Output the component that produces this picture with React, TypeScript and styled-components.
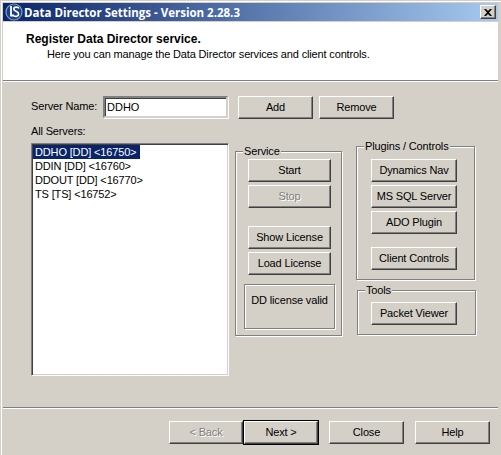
import styled, { createGlobalStyle } from 'styled-components';

const FACE = '#d4d0c8';

const GlobalStyle = createGlobalStyle`
    html, body {
        margin: 0;
        padding: 0;
        background: ${FACE};
    }
    body {
        font-family: "Liberation Sans", Arial, sans-serif;
        font-size: 11px;
        letter-spacing: -0.15px;
        color: #000;
    }
`;

const Window = styled.div`
    width: 501px;
    height: 455px;
    box-sizing: border-box;
    padding: 3px 3px 0;
    display: flex;
    flex-direction: column;
    background: ${FACE};
    box-shadow: inset 1px 1px 0 ${FACE}, inset 2px 2px 0 #fff;
    overflow: hidden;
`;

const TitleBar = styled.div`
    height: 18px;
    flex: none;
    display: flex;
    align-items: center;
    padding: 0 2px 0 2px;
    background: linear-gradient(to right, #0a246a, #a6caf0);
`;

const LogoMark = styled.svg`
    flex: none;
`;

const TitleText = styled.span`
    margin-left: 1px;
    font-family: "Open Sans", sans-serif;
    font-weight: 700;
    font-size: 11.5px;
    letter-spacing: 0;
    color: #fff;
    white-space: nowrap;
    flex: 1;
`;

const CloseBox = styled.div`
    width: 16px;
    height: 14px;
    box-sizing: border-box;
    display: flex;
    align-items: center;
    justify-content: center;
    background: ${FACE};
    border: 1px solid;
    border-color: #fff #404040 #404040 #fff;
    box-shadow: inset -1px -1px 0 #808080;
`;

const Header = styled.div`
    height: 58px;
    flex: none;
    box-sizing: border-box;
    background: #fff;
    margin-top: 1px;
    padding: 10px 0 0 23px;
`;

const HeaderTitle = styled.div`
    font-weight: 700;
    font-size: 12px;
    letter-spacing: 0;
    line-height: 15px;
`;

const HeaderText = styled.div`
    margin-left: 21px;
    line-height: 15px;
`;

const Etched = styled.div`
    height: 1px;
    flex: none;
    background: #808080;
    border-bottom: 1px solid #fff;
`;

const Body = styled.div`
    flex: 1;
    padding: 14px 0 0 28px;
`;

const ServerRow = styled.div`
    display: flex;
    align-items: flex-start;
`;

const NameLabel = styled.label`
    width: 72px;
    flex: none;
    line-height: 21px;
    white-space: nowrap;
`;

const NameInput = styled.input`
    width: 125px;
    height: 22px;
    flex: none;
    box-sizing: border-box;
    margin: 0 10px 0 0;
    padding: 0 0 0 2px;
    border: 2px solid;
    border-color: #808080 #d4d0c8 #d4d0c8 #808080;
    box-shadow: inset 1px 1px 0 #404040, 1px 1px 0 #fff;
    font: inherit;
    letter-spacing: 0;
    background: #fff;
`;

const Button = styled.button<{ $width?: number; $top?: number; $left?: number; $isDefault?: boolean }>`
    display: block;
    width: ${props => props.$width ?? 83}px;
    height: 23px;
    flex: none;
    box-sizing: border-box;
    margin: ${props => props.$top ?? 0}px 0 0 ${props => props.$left ?? 0}px;
    padding: 0 0 1px;
    font: inherit;
    letter-spacing: inherit;
    color: #000;
    background: ${FACE};
    border: 1px solid;
    border-color: #fff #404040 #404040 #fff;
    box-shadow: inset -1px -1px 0 #808080;
    ${props => props.$isDefault && `
        outline: 1px solid #000;
        outline-offset: 0;
    `}
    &:disabled {
        color: #808080;
        text-shadow: 1px 1px 0 #fff;
    }
`;

const Columns = styled.div`
    display: flex;
    align-items: flex-start;
`;

const LeftColumn = styled.div`
    width: 198px;
    flex: none;
    margin-right: 6px;
`;

const ListLabel = styled.div`
    margin-top: 5px;
    line-height: 14px;
    height: 19px;
`;

const ServerList = styled.div`
    height: 233px;
    box-sizing: border-box;
    padding: 1px;
    background: #fff;
    border: 1px solid;
    border-color: #808080 #fff #fff #808080;
    box-shadow: inset 1px 1px 0 #404040, inset -1px -1px 0 #d4d0c8;
`;

const ServerItem = styled.div<{ $selected?: boolean }>`
    width: fit-content;
    height: 14px;
    line-height: 14px;
    padding: 0 4px 0 2px;
    color: ${props => props.$selected ? '#fff' : '#000'};
    background: ${props => props.$selected ? '#0a246a' : 'transparent'};
    white-space: nowrap;
`;

const Group = styled.fieldset<{ $width: number; $height: number; $top?: number; $left?: number; $pad?: number }>`
    width: ${props => props.$width}px;
    height: ${props => props.$height}px;
    flex: none;
    box-sizing: border-box;
    margin: ${props => props.$top ?? 0}px 0 0 ${props => props.$left ?? 0}px;
    padding: ${props => props.$pad ?? 1}px 0 0;
    min-inline-size: 0;
    border: 1px solid #808080;
    box-shadow: 1px 1px 0 #fff, inset 1px 1px 0 #fff;
`;

const Legend = styled.legend`
    margin-left: 7px;
    padding: 0 1px;
    height: 13px;
    line-height: 13px;
    background: ${FACE};
`;

const ButtonStack = styled.div<{ $left: number }>`
    margin-left: ${props => props.$left}px;
`;

const LicenseBox = styled.div`
    width: 91px;
    height: 45px;
    box-sizing: border-box;
    margin: 9px 0 0 8px;
    padding-top: 9px;
    text-align: center;
    border: 1px solid #808080;
    box-shadow: 1px 1px 0 #fff, inset 1px 1px 0 #fff;
`;

const RightColumn = styled.div`
    flex: none;
    margin-left: 14px;
`;

const Footer = styled.div`
    display: flex;
    justify-content: flex-end;
    padding: 12px 8px 0 0;
    height: 46px;
    flex: none;
    box-sizing: border-box;
`;

const Logo = () => (
    <LogoMark width="18" height="18" viewBox="0 0 18 18">
        <circle cx="9" cy="9" r="8" fill="#1a3f82" stroke="#7f9fcc" strokeWidth="1.2" />
        <path d="M6 3 V12.500 H9" fill="none" stroke="#fff" strokeWidth="1.8" />
        <path d="M14 5.500 C13 3.500 8.800 3.600 8.800 6 C8.800 8.600 13.600 8 13.600 11 C13.600 13.600 10.500 13.900 8.800 12.800" fill="none" stroke="#fff" strokeWidth="1.6" />
    </LogoMark>
);

const App = () => {
    return (
        <Window>
            <GlobalStyle />
            <TitleBar>
                <Logo />
                <TitleText>Data Director Settings - Version 2.28.3</TitleText>
                <CloseBox>
                    <svg width="8" height="7" viewBox="0 0 8 7">
                        <path d="M0 0h2l2 2 2-2h2L5 3.500 8 7H6L4 5 2 7H0l3-3.500z" fill="#000" />
                    </svg>
                </CloseBox>
            </TitleBar>
            <Header>
                <HeaderTitle>Register Data Director service.</HeaderTitle>
                <HeaderText>Here you can manage the Data Director services and client controls.</HeaderText>
            </Header>
            <Etched />
            <Body>
                <ServerRow>
                    <NameLabel>Server Name:</NameLabel>
                    <NameInput defaultValue="DDHO" />
                    <Button $width={75}>Add</Button>
                    <Button $width={75} $left={6}>Remove</Button>
                </ServerRow>
                <Columns>
                    <LeftColumn>
                        <ListLabel>All Servers:</ListLabel>
                        <ServerList>
                            <ServerItem $selected>DDHO [DD] &lt;16750&gt;</ServerItem>
                            <ServerItem>DDIN [DD] &lt;16760&gt;</ServerItem>
                            <ServerItem>DDOUT [DD] &lt;16770&gt;</ServerItem>
                            <ServerItem>TS [TS] &lt;16752&gt;</ServerItem>
                        </ServerList>
                    </LeftColumn>
                    <Group $width={107} $height={191} $top={26}>
                        <Legend>Service</Legend>
                        <ButtonStack $left={12}>
                            <Button>Start</Button>
                            <Button $top={3} disabled>Stop</Button>
                            <Button $top={18}>Show License</Button>
                            <Button $top={3}>Load License</Button>
                        </ButtonStack>
                        <LicenseBox>DD license valid</LicenseBox>
                    </Group>
                    <RightColumn>
                        <Group $width={119} $height={140} $top={21} $pad={6}>
                            <Legend>Plugins / Controls</Legend>
                            <ButtonStack $left={14}>
                                <Button $width={86}>Dynamics Nav</Button>
                                <Button $width={86} $top={3}>MS SQL Server</Button>
                                <Button $width={86} $top={3}>ADO Plugin</Button>
                                <Button $width={86} $top={13}>Client Controls</Button>
                            </ButtonStack>
                        </Group>
                        <Group $width={119} $height={51} $top={4} $left={1} $pad={5}>
                            <Legend>Tools</Legend>
                            <ButtonStack $left={13}>
                                <Button $width={86}>Packet Viewer</Button>
                            </ButtonStack>
                        </Group>
                    </RightColumn>
                </Columns>
            </Body>
            <Etched />
            <Footer>
                <Button $width={74} disabled>&lt; Back</Button>
                <Button $width={74} $isDefault $left={1}>Next &gt;</Button>
                <Button $width={75} $left={11}>Close</Button>
                <Button $width={75} $left={11}>Help</Button>
            </Footer>
        </Window>
    );
};

export default App;
